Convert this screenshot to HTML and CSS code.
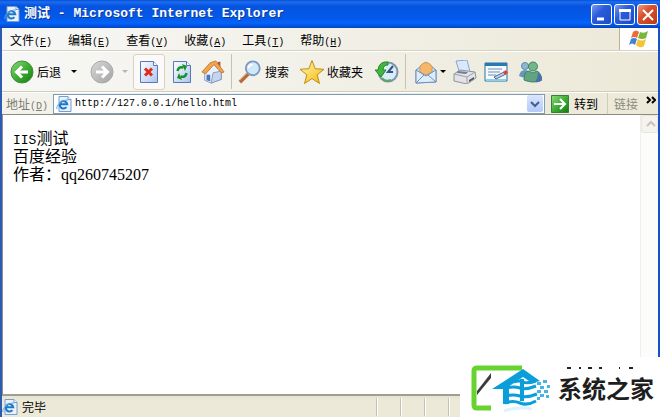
FILE: index.html
```
<!DOCTYPE html>
<html lang="zh-CN">
<head>
    <meta charset="UTF-8">
    <meta name="viewport" content="width=device-width, initial-scale=1.0">
    <title>测试 - Microsoft Internet Explorer</title>
    <link rel="stylesheet" href="styles.css">
</head>
<body>
    <svg class="defs" width="0" height="0" aria-hidden="true">
        <defs>
            <linearGradient id="green" x1="0" y1="0" x2="1" y2="1">
                <stop offset="0" stop-color="#8fda7c"/>
                <stop offset=".5" stop-color="#3fae34"/>
                <stop offset="1" stop-color="#137a13"/>
            </linearGradient>
            <linearGradient id="gray" x1="0" y1="0" x2="1" y2="1">
                <stop offset="0" stop-color="#d8d8d8"/>
                <stop offset="1" stop-color="#a3a3a3"/>
            </linearGradient>
            <linearGradient id="paper" x1="0" y1="0" x2="1" y2="1">
                <stop offset="0" stop-color="#ffffff"/>
                <stop offset="1" stop-color="#a9c4f2"/>
            </linearGradient>
            <linearGradient id="gold" x1="0" y1="0" x2="1" y2="1">
                <stop offset="0" stop-color="#fffbb8"/>
                <stop offset="1" stop-color="#f2b705"/>
            </linearGradient>
            <symbol id="ie" viewBox="0 0 16 16">
                <path d="M3 .5h9l3 3v12H3z" fill="#e8f1fc" stroke="#7a9cc8"/>
                <path d="M12 .5v3h3" fill="#fff" stroke="#7a9cc8"/>
                <path d="M10.400 11.200a3.700 3.700 0 1 1 .8-3H4.500" fill="none" stroke="#1c78c8" stroke-width="2"/>
                <path d="M1 13C-.5 10 6 3.500 12 4" fill="none" stroke="#58a8e8" stroke-width="1"/>
            </symbol>
        </defs>
    </svg>

    <div class="window">
        <header class="titlebar">
            <svg class="icon-small" aria-hidden="true"><use href="#ie"/></svg>
            <h1>测试 - Microsoft Internet Explorer</h1>
            <div class="window-buttons">
                <button type="button" aria-label="最小化"><svg width="20" height="20"><path d="M5 14h7" stroke="#fff" stroke-width="3"/></svg></button>
                <button type="button" aria-label="最大化"><svg width="20" height="20"><path d="M5 5h10v10H5z" fill="none" stroke="#fff"/><path d="M4 5.500h12" stroke="#fff" stroke-width="3"/></svg></button>
                <button type="button" class="close" aria-label="关闭"><svg width="20" height="20"><path d="M5 5l10 10M15 5L5 15" stroke="#fff" stroke-width="2"/></svg></button>
            </div>
        </header>

        <nav class="menubar">
            <button type="button">文件<span>(<u>F</u>)</span></button>
            <button type="button">编辑<span>(<u>E</u>)</span></button>
            <button type="button">查看<span>(<u>V</u>)</span></button>
            <button type="button">收藏<span>(<u>A</u>)</span></button>
            <button type="button">工具<span>(<u>T</u>)</span></button>
            <button type="button">帮助<span>(<u>H</u>)</span></button>
            <div class="flag">
                <svg width="20" height="20" viewBox="0 0 20 20" aria-hidden="true">
                    <path d="M4 3q3-3 6 0L8 9q-3-2-6 0z" fill="#ee6a35"/>
                    <path d="M11 3q4 2 8-1l-2 7q-4 2-8 0z" fill="#79b63a"/>
                    <path d="M2 10q3-2 6 0l-2 6q-3-3-6 0z" fill="#3f83d6"/>
                    <path d="M9 10q3 3 8 0l-2 7q-4 3-8-1z" fill="#f5c434"/>
                </svg>
            </div>
        </nav>

        <div class="toolbar">
            <button type="button" class="tool">
                <svg width="24" height="24" viewBox="0 0 24 24"><circle cx="12" cy="12" r="11" fill="url(#green)" stroke="#3b8f35"/><path d="M18 12H7M12 6.500L6.500 12l5.500 5.500" fill="none" stroke="#fff" stroke-width="3"/></svg>
                后退
            </button>
            <button type="button" class="drop" aria-label="后退列表"></button>
            <button type="button" class="tool forward" aria-label="前进">
                <svg width="24" height="24" viewBox="0 0 24 24"><circle cx="12" cy="12" r="11" fill="url(#gray)" stroke="#aaa"/><path d="M6 12h11M12 6.500l5.500 5.500-5.500 5.500" fill="none" stroke="#fff" stroke-width="3"/></svg>
            </button>
            <button type="button" class="drop disabled" aria-label="前进列表" disabled></button>
            <button type="button" class="tool stop" aria-label="停止">
                <svg width="20" height="24" viewBox="0 0 20 24"><path d="M1.500 1.500h13l4 4v17h-17z" fill="url(#paper)" stroke="#5878b8"/><path d="M14.500 1.500v4h4" fill="#fff" stroke="#5878b8"/><path d="M6 8.500l7 7M13 8.500l-7 7" stroke="#df2b1c" stroke-width="3"/></svg>
            </button>
            <button type="button" class="tool refresh" aria-label="刷新">
                <svg width="20" height="24" viewBox="0 0 20 24"><path d="M1.500 1.500h13l4 4v17h-17z" fill="url(#paper)" stroke="#5878b8"/><path d="M14.500 1.500v4h4" fill="#fff" stroke="#5878b8"/><path d="M5.500 11q1-5 6-3.500" fill="none" stroke="#159324" stroke-width="2.500"/><path d="M10 4l5 2-2 5z" fill="#159324"/><path d="M14.500 13q-1 5-6 3.500" fill="none" stroke="#159324" stroke-width="2.500"/><path d="M10 20l-5-2 2-5z" fill="#159324"/></svg>
            </button>
            <button type="button" class="tool home" aria-label="主页">
                <svg width="24" height="24" viewBox="0 0 26 26"><path d="M18 2h3v7h-3z" fill="#b84b3a"/><path d="M4 12l9-9 9 9v9l-11 4-7-3z" fill="#eaf0fa" stroke="#8499bf"/><path d="M13 14l9-2v9l-11 4z" fill="#c5d5f0" stroke="#8499bf"/><path d="M1 13L10 3l6-2 9 12-3 1-8-9-9 10z" fill="#f2a548" stroke="#bd7a38"/><path d="M6 16h4v7l-4-1z" fill="#4a76bd"/></svg>
            </button>
            <span class="divider"></span>
            <button type="button" class="tool">
                <svg width="24" height="24" viewBox="0 0 26 26"><path d="M2 24l9-9" stroke="#b36a3c" stroke-width="4"/><path d="M2 22l8-8" stroke="#efb07c"/><circle cx="16" cy="9" r="7.500" fill="#cdeafa" stroke="#8095c4" stroke-width="2"/><path d="M11 9q1-4 5-4" fill="none" stroke="#fff" stroke-width="2"/></svg>
                搜索
            </button>
            <button type="button" class="tool favorites">
                <svg width="26" height="26" viewBox="0 0 26 26"><path d="M13 1.500l3.200 8.200 8.800.6-6.800 5.500 2.300 8.700-7.500-4.900-7.500 4.900 2.300-8.700L1 10.300l8.800-.6z" fill="url(#gold)" stroke="#c68a17" stroke-linejoin="round"/></svg>
                收藏夹
            </button>
            <button type="button" class="tool history" aria-label="历史">
                <svg width="24" height="24" viewBox="0 0 24 24"><circle cx="13" cy="12" r="9.500" fill="#d9ecf7" stroke="#8094aa" stroke-width="2"/><path d="M18 6l-5 6h5" fill="none" stroke="#2d5685" stroke-width="2"/><path d="M13 2Q4 1 3 10H0l6 7 5-7H8q0-5 5-5z" fill="#44b53e" stroke="#20862a"/><path d="M7 18q3 4 9 2" fill="none" stroke="#58a85a" stroke-width="2"/></svg>
            </button>
            <span class="divider"></span>
            <button type="button" class="tool mail" aria-label="邮件">
                <svg width="22" height="24" viewBox="0 0 22 24"><path d="M1 10L11 2l10 8v12L1 23z" fill="#bfd9f3" stroke="#718fba"/><path d="M5 6q6-7 12 0v6l-6 3-6-3z" fill="#f5b769" stroke="#d69a57"/><path d="M1 10l10 6 10-6v12L1 23z" fill="#dcedfc" stroke="#718fba"/><path d="M1 23l8-8M21 22l-8-7" stroke="#718fba"/></svg>
            </button>
            <button type="button" class="drop mail-drop" aria-label="邮件列表"></button>
            <button type="button" class="tool print" aria-label="打印">
                <svg width="24" height="24" viewBox="0 0 24 24"><path d="M3 1l11-1 3 12-10 2z" fill="#d9e8fd" stroke="#8aa5d0"/><path d="M1 14l6-4 15 2 1 6-9 6-13-3z" fill="#e1e3e8" stroke="#8d929e"/><path d="M1 14l13 3 8-5M14 17v7" fill="none" stroke="#9ba0aa"/><path d="M5 11l10 1-2 2-9-1z" fill="#777e8d"/><path d="M16 20l5-3v2l-5 3z" fill="#555"/></svg>
            </button>
            <button type="button" class="tool" aria-label="编辑">
                <svg width="24" height="24" viewBox="0 0 24 24"><path d="M1 3h22v18H1z" fill="#f4faff" stroke="#2c6e9f"/><path d="M1 3h22v3H1z" fill="#2879b4"/><path d="M4 9h14M4 12h12M4 15h8" stroke="#6d8faf"/><path d="M2 20h20" stroke="#8bd0ec" stroke-width="2"/><path d="M10 17l10-5 2 2-10 5z" fill="#b9cfe9" stroke="#53698c"/><path d="M19 12l3-2 2 3-3 2z" fill="#d94339"/></svg>
            </button>
            <button type="button" class="tool messenger" aria-label="Messenger">
                <svg width="24" height="24" viewBox="0 0 24 24"><circle cx="7" cy="6" r="3.500" fill="#8bb9cf" stroke="#5a8aa5"/><path d="M1 16q1-6 6-6t5 6q-5 3-11 0z" fill="#6396b8"/><circle cx="15" cy="6.500" r="4.500" fill="#75b58d" stroke="#3f8063"/><path d="M6 20q0-9 5-9l4 2 4-2q4 2 5 9-9 4-18 0z" fill="#61a57f" stroke="#407e73"/><path d="M17 22q3-4 3-10 4 4 4 8-3 3-7 2z" fill="#496fae"/></svg>
            </button>
        </div>

        <form class="addressbar">
            <label for="address">地址<span>(<u>D</u>)</span></label>
            <div class="combo">
                <svg class="icon-small" aria-hidden="true"><use href="#ie"/></svg>
                <input type="text" id="address" name="address" value="http://127.0.0.1/hello.html">
                <button type="button" class="combo-arrow" aria-label="展开"><svg width="16" height="18"><path d="M4 7l4 4 4-4" fill="none" stroke="#40608f" stroke-width="2"/></svg></button>
            </div>
            <button type="button" class="go">
                <svg width="18" height="18" viewBox="0 0 18 18"><path d="M.5.5h17v17H.5z" fill="url(#green)" stroke="#33813a"/><path d="M3 9h11M9 4l5 5-5 5" fill="none" stroke="#fff" stroke-width="2"/></svg>
                转到
            </button>
            <button type="button" class="links">链接</button>
            <button type="button" class="more" aria-label="更多链接"><svg width="10" height="8"><path d="M1 1l3 3-3 3M6 1l3 3-3 3" fill="none" stroke="#000" stroke-width="2"/></svg></button>
        </form>

        <div class="view">
            <main class="page">
                <p><span class="fixed">IIS</span>测试</p>
                <p>百度经验</p>
                <p>作者：qq260745207</p>
            </main>
            <div class="scrollbar">
                <button type="button" aria-label="向上滚动"><svg width="15" height="16"><path d="M4 10l4-4 4 4" fill="none" stroke="#c4c4bc" stroke-width="2"/></svg></button>
            </div>
        </div>

        <footer class="statusbar">
            <svg class="icon-small" aria-hidden="true"><use href="#ie"/></svg>
            <span class="status">完毕</span>
            <div class="cells"><i></i><i></i><i></i><i></i></div>
        </footer>
    </div>

    <div class="watermark">
        <svg width="92" height="60" viewBox="0 0 92 60" aria-hidden="true">
            <path d="M31 51H17q-3 0-3-3V14q0-3 3-3h45" fill="none" stroke="#66d32e" stroke-width="5"/>
            <path d="M17 34L31 16v5L17 38z" fill="#3c3c3c"/>
            <path d="M63 12l17 12-8 2-9-6-18 12H32z" fill="#0b9edb"/>
            <path d="M43 30h6v17h-6zM60 22h4v22h-4z" fill="#0b9edb"/>
            <path d="M45 46q8-3 15 0t16-2M45 39q8-2 15 0t17-2M46 31q8-2 14 0t16-2M54 25q5-2 9 0t13-1" fill="none" stroke="#0b9edb" stroke-width="3"/>
            <path d="M77 25h4v3h-4zM83 23h4v3h-4zM80 29h4v3h-4zM87 28h3v3h-3zM77 33h4v3h-4zM84 33h4v3h-4zM80 37h4v3h-4zM77 40h3v3h-3zM86 38h3v3h-3z" fill="#45b5e6"/>
            <path d="M44 54q14-5 28-2" fill="none" stroke="#dff3fb" stroke-width="3"/>
        </svg>
        <div class="brand">
            <svg width="80" height="4" aria-hidden="true"><path d="M9 3h4M21 3h2M30 3h4M41 3h3M61 3h1M71 3h4" stroke="#222" stroke-width="2"/></svg>
            <strong>系统之家</strong>
        </div>
    </div>
</body>
</html>
```
FILE: styles.css
```
* {
    margin: 0;
    padding: 0;
    box-sizing: border-box;
}

body {
    font-family: "Liberation Sans", "Noto Sans CJK SC", sans-serif;
    font-size: 12px;
    color: #000;
}

button {
    border: none;
    background: none;
    font: inherit;
    color: inherit;
    white-space: nowrap;
}

svg {
    display: block;
    flex-shrink: 0;
}

.defs {
    position: absolute;
}

.window {
    display: flex;
    flex-direction: column;
    min-height: 100vh;
    border-left: 2px solid #2c5bb0;
    border-right: 2px solid #1650cc;
    background: #ece9d8;
}

.icon-small {
    width: 16px;
    height: 16px;
}

/* title bar */
.titlebar {
    display: flex;
    align-items: center;
    gap: 4px;
    height: 28px;
    margin: 0 -2px;
    padding: 0 2px 0 4px;
    background: linear-gradient(#0a4fd0, #1c6df2 2px, #0553df 6px, #0459ea 18px, #0464fb 23px, #0344c4);
}

.titlebar h1 {
    flex: 1;
    font: bold 13px/20px "Liberation Mono", "Noto Sans CJK SC", monospace;
    color: #fff;
    text-shadow: 1px 1px #0c3a94;
    white-space: nowrap;
}

.window-buttons {
    display: flex;
    gap: 2px;
}

.window-buttons button {
    width: 21px;
    height: 21px;
    border: 1px solid #fff;
    border-radius: 3px;
    background: linear-gradient(135deg, #7b9df0, #2a5bd9 40%, #1c4cc8);
}

.window-buttons .close {
    background: linear-gradient(135deg, #ec9c82, #d9512c 40%, #bb3a17);
}

/* menu */
.menubar {
    display: flex;
    height: 23px;
    border-bottom: 1px solid #d5d2c2;
    background: linear-gradient(90deg, #f7f7f6, #ece9d8);
}

.menubar button {
    padding: 0 8px;
}

.menubar span,
.addressbar label span {
    font: 10px "Liberation Mono", monospace;
}

.flag {
    display: flex;
    align-items: center;
    justify-content: center;
    width: 39px;
    margin-left: auto;
    border-left: 1px solid #b5b29e;
    background: #fff;
}

/* standard buttons */
.toolbar {
    display: flex;
    align-items: center;
    height: 41px;
    padding-left: 8px;
    border-top: 1px solid #fff;
    border-bottom: 1px solid #cfccbb;
    background: linear-gradient(90deg, #f7f7f6, #ece9d8);
}

.tool {
    display: flex;
    align-items: center;
    gap: 3px;
}

.drop {
    width: 6px;
    height: 3px;
    margin-left: 10px;
    background: #000;
    clip-path: polygon(0 0, 100% 0, 50% 100%);
}

.drop.disabled {
    margin-left: 8px;
    background: #b8b6aa;
}

.mail-drop {
    margin-left: 3px;
}

.forward {
    margin-left: 13px;
}

.stop {
    justify-content: center;
    width: 32px;
    height: 36px;
    margin-left: 5px;
    border: 1px solid #d5d2c6;
    border-radius: 3px;
    background: #fbfaf8;
}

.refresh,
.print {
    margin-left: 7px;
}

.print + .tool {
    margin-left: 7px;
}

.home {
    margin-left: 9px;
}

.favorites,
.messenger {
    margin-left: 10px;
}

.history {
    margin-left: 12px;
}

.divider {
    width: 1px;
    height: 35px;
    margin: 0 6px;
    background: #c5c2b2;
}

.favorites {
    gap: 2px;
}

.mail {
    margin-left: 3px;
}

/* address */
.addressbar {
    display: flex;
    align-items: center;
    height: 23px;
    padding-left: 4px;
    border-top: 1px solid #fff;
    border-bottom: 1px solid #8d8b7c;
    background: linear-gradient(90deg, #f3f2ec, #ece9d8);
}

.addressbar label {
    margin-right: 5px;
    color: #7d7b70;
    white-space: nowrap;
}

.combo {
    display: flex;
    flex: 1;
    align-items: center;
    gap: 3px;
    height: 20px;
    padding: 0 1px 0 2px;
    border: 1px solid #7f9db9;
    background: #fff;
}

.combo input {
    flex: 1;
    min-width: 0;
    border: none;
    outline: none;
    background: none;
    font: 10px "Liberation Mono", monospace;
    color: #000;
}

.combo-arrow {
    width: 16px;
    height: 17px;
    border-radius: 2px;
    background: linear-gradient(#dbe6fe, #b3c9f7);
}

.go {
    display: flex;
    align-items: center;
    gap: 5px;
    margin: 0 9px 0 6px;
}

.links {
    height: 21px;
    padding: 0 8px 0 6px;
    border-left: 1px solid #cfccbb;
    color: #8c8a80;
}

.more {
    align-self: flex-start;
    padding: 3px 2px 0 0;
}

/* page */
.view {
    display: flex;
    flex: 1;
    border-left: 1px solid #8a9099;
    background: #fff;
}

.page {
    flex: 1;
    padding: 15px 10px;
    font: 16px/18px "Liberation Serif", "Noto Sans CJK SC", serif;
}

.fixed {
    font: 13px/1 "Liberation Mono", monospace;
}

.scrollbar {
    width: 18px;
    border-left: 1px solid #f0efea;
    background: #fcfcfa;
}

.scrollbar button {
    width: 17px;
    height: 18px;
    padding-left: 1px;
    border: 1px solid #e8e7e0;
    border-radius: 2px;
    background: #f4f3ee;
}

/* status */
.statusbar {
    display: flex;
    align-items: center;
    gap: 4px;
    height: 23px;
    border-top: 2px solid #a09e8e;
    background: linear-gradient(#e6e3d0, #ece9d8 4px);
}

.status {
    flex: 1;
}

.cells {
    display: flex;
    height: 18px;
    padding-right: 186px;
}

.cells i {
    width: 24px;
    border-left: 1px solid #c5c2b0;
    box-shadow: inset 1px 0 #fff;
}

.watermark {
    position: absolute;
    right: 0;
    bottom: 0;
    display: flex;
    gap: 6px;
    width: 200px;
    height: 60px;
    background: #fff;
}

.brand {
    padding-top: 8px;
    white-space: nowrap;
}

.brand strong {
    display: block;
    font: bold 24px/38px "Noto Sans CJK SC", sans-serif;
    color: #1e1e1e;
}
```
